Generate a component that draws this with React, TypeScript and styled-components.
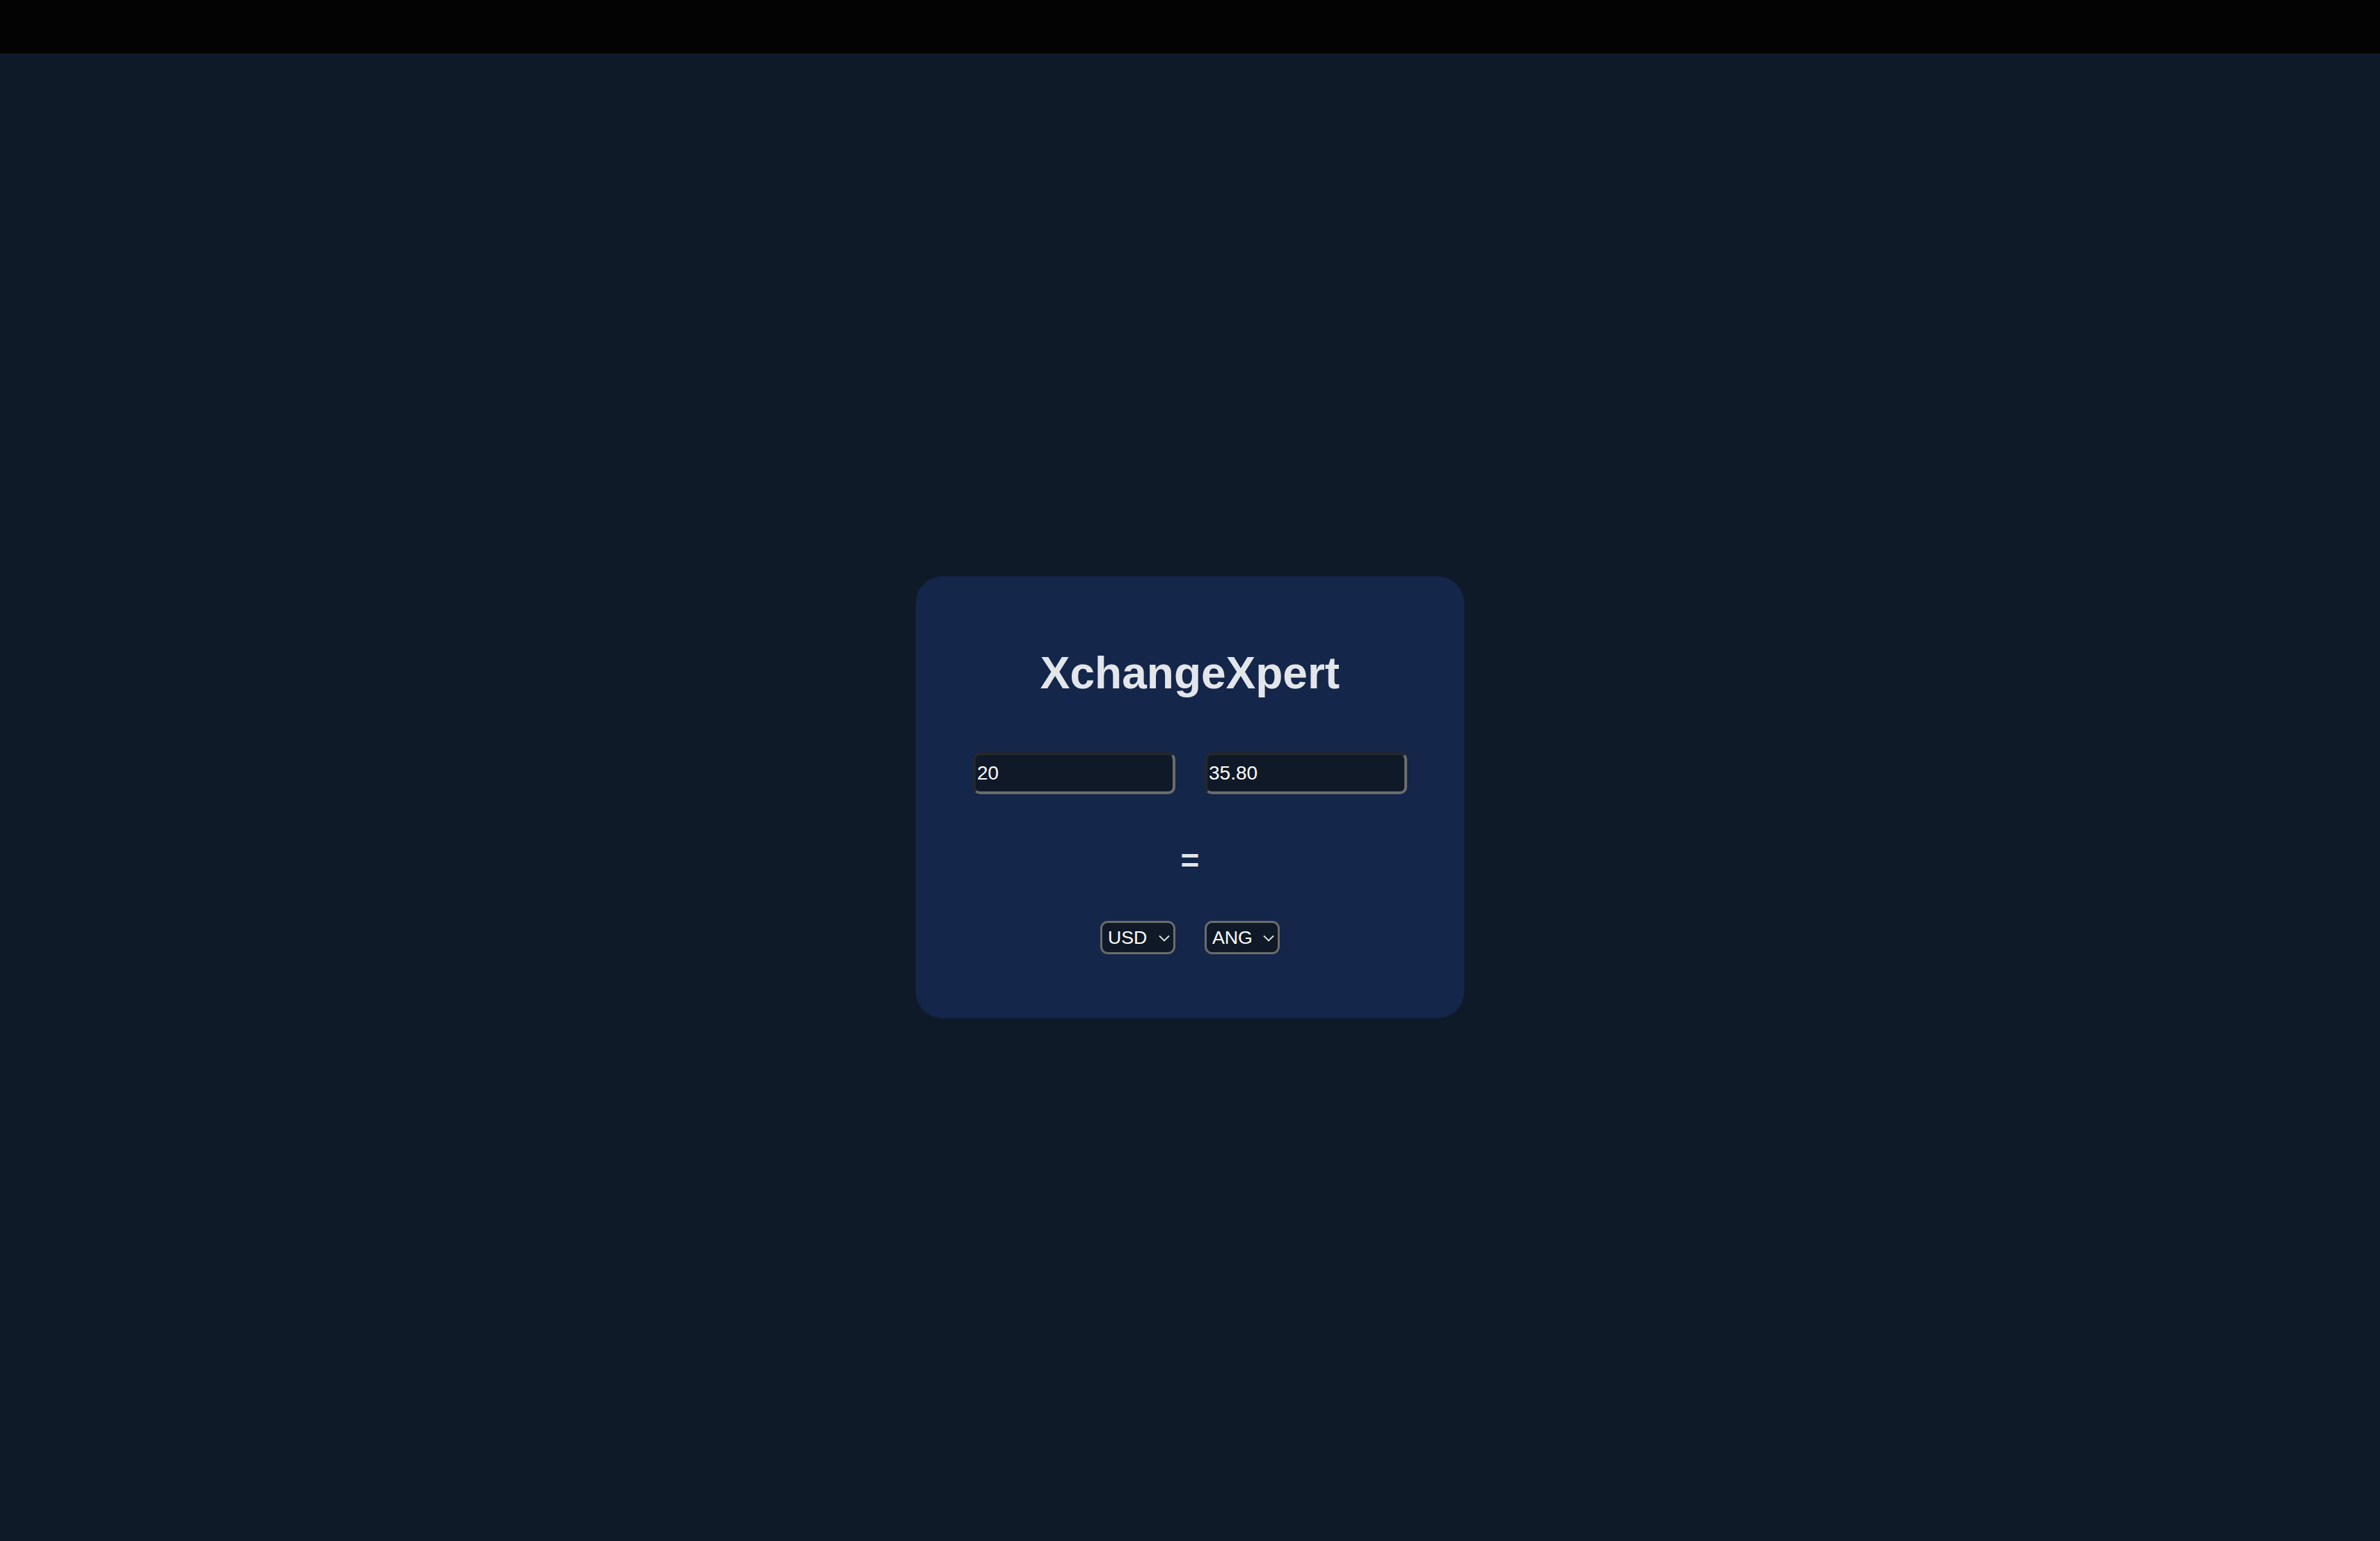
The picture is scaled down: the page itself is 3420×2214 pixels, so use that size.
import { useState } from "react";
import styled, { createGlobalStyle } from "styled-components";

const GlobalStyle = createGlobalStyle`
  html, body {
    margin: 0;
    padding: 0;
    background-color: #0f1a29;
    font-family: "Liberation Sans", Arial, sans-serif;
  }
`;

const Page = styled.div`
  display: flex;
  flex-direction: column;
  height: 100vh;
`;

const TopBar = styled.div`
  height: 77px;
  background-color: #030303;
  flex-shrink: 0;
`;

const Main = styled.main`
  flex: 1;
  display: flex;
  align-items: center;
  justify-content: center;
`;

const Card = styled.form`
  width: 788px;
  box-sizing: border-box;
  padding: 103px 0 92px;
  background-color: #142649;
  border-radius: 38px;
  display: flex;
  flex-direction: column;
  align-items: center;
`;

const Title = styled.h1`
  margin: 0 0 78px;
  font-size: 64px;
  line-height: 72px;
  font-weight: 700;
  color: #e2e6eb;
`;

const Row = styled.div`
  display: flex;
  gap: 42px;
  justify-content: center;
`;

const AmountInput = styled.input`
  box-sizing: border-box;
  width: 291px;
  height: 60px;
  padding: 0 2px;
  font-family: "Liberation Sans", Arial, sans-serif;
  font-size: 28px;
  color: #ffffff;
  background-color: #0f1928;
  border-style: solid;
  border-width: 4px;
  border-color: #272727 #6c6c6c #6c6c6c #272727;
  border-radius: 10px;
  outline: none;
`;

const Equals = styled.h2`
  margin: 67px 0 59px;
  font-size: 46px;
  line-height: 56px;
  font-weight: 700;
  color: #e2e6eb;
`;

const SelectWrap = styled.div`
  position: relative;
  width: 108px;
  height: 48px;
`;

const CurrencySelect = styled.select`
  appearance: none;
  box-sizing: border-box;
  width: 100%;
  height: 100%;
  padding: 0 0 0 8px;
  font-family: "Liberation Sans", Arial, sans-serif;
  font-size: 26.7px;
  color: #ffffff;
  background-color: #0f1928;
  border: 3px solid #6c6c6c;
  border-radius: 11px;
  outline: none;
`;

const Chevron = styled.svg`
  position: absolute;
  right: 8px;
  top: 20px;
  width: 16px;
  height: 10px;
  pointer-events: none;
`;

const currencies = ["USD", "ANG", "EUR", "GBP", "INR", "JPY"];

const Picker = ({
  value,
  onChange,
}: {
  value: string;
  onChange: (v: string) => void;
}) => (
  <SelectWrap>
    <CurrencySelect value={value} onChange={(e) => onChange(e.target.value)}>
      {currencies.map((c) => (
        <option key={c} value={c}>
          {c}
        </option>
      ))}
    </CurrencySelect>
    <Chevron viewBox="0 0 16 10">
      <path
        d="M1 1.5 L8 8.5 L15 1.5"
        fill="none"
        stroke="#e6e6e6"
        strokeWidth="1.8"
      />
    </Chevron>
  </SelectWrap>
);

const App = () => {
  const [amount, setAmount] = useState("20");
  const [from, setFrom] = useState("USD");
  const [to, setTo] = useState("ANG");
  // 1 USD = 1.79 ANG
  const result = (Number(amount) * 1.79).toFixed(2);

  return (
    <Page>
      <GlobalStyle />
      <TopBar />
      <Main>
        <Card onSubmit={(e) => e.preventDefault()}>
          <Title>XchangeXpert</Title>
          <Row>
            <AmountInput
              type="text"
              value={amount}
              onChange={(e) => setAmount(e.target.value)}
            />
            <AmountInput type="text" value={result} readOnly />
          </Row>
          <Equals>=</Equals>
          <Row>
            <Picker value={from} onChange={setFrom} />
            <Picker value={to} onChange={setTo} />
          </Row>
        </Card>
      </Main>
    </Page>
  );
};

export default App;
